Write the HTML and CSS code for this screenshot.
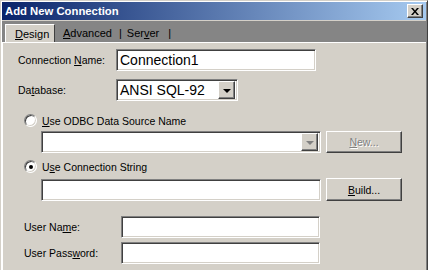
FILE: index.html
```html
<!DOCTYPE html>
<html lang="en">
<head>
    <meta charset="UTF-8">
    <title>Add New Connection</title>
    <link rel="stylesheet" href="styles.css">
</head>
<body>
    <div class="window">
        <div class="titlebar">
            <span class="title">Add New Connection</span>
            <div class="close btn">
                <svg width="8" height="7" viewBox="0 0 8 7">
                    <path d="M0 0h2l2 2.5 2-2.5h2l-3 3.5 3 3.5h-2l-2-2.5-2 2.5h-2l3-3.5z" fill="#000"/>
                </svg>
            </div>
        </div>

        <div class="tabs">
            <div class="tab active"><u>D</u>esign</div>
            <div class="tab tab-advanced"><u>A</u>dvanced</div>
            <div class="sep">|</div>
            <div class="tab tab-server">Ser<u>v</u>er</div>
            <div class="sep">|</div>
        </div>

        <div class="page">
            <div class="row row-name">
                <label class="label">Connection <u>N</u>ame:</label>
                <div class="field big name-field">Connection1</div>
            </div>
            <div class="row row-db">
                <label class="label">Da<u>t</u>abase:</label>
                <div class="field big db-field">
                    <span>ANSI SQL-92</span>
                    <div class="drop btn"><span class="arrow"></span></div>
                </div>
            </div>

            <div class="radio-row radio-odbc">
                <span class="radio"></span>
                <span><u>U</u>se ODBC Data Source Name</span>
            </div>
            <div class="row row-wide row-combo">
                <div class="field wide">
                    <div class="drop btn disabled"><span class="arrow"></span></div>
                </div>
                <div class="btn push disabled"><span><u>N</u>ew...</span></div>
            </div>

            <div class="radio-row radio-string">
                <span class="radio checked"></span>
                <span>U<u>s</u>e Connection String</span>
            </div>
            <div class="row row-wide row-string">
                <div class="field wide"></div>
                <div class="btn push build"><span><u>B</u>uild...</span></div>
            </div>

            <div class="row row-user">
                <label class="label user-label">User Na<u>m</u>e:</label>
                <div class="field user-field"></div>
            </div>
            <div class="row row-pass">
                <label class="label user-label">User Pass<u>w</u>ord:</label>
                <div class="field user-field"></div>
            </div>
        </div>
    </div>
</body>
</html>
```

FILE: styles.css
```css
body {
    margin: 0;
    background: #d4d0c8;
    font-family: 'Liberation Sans', Arial, sans-serif;
    font-size: 10.5px;
    color: #000;
}
u {
    text-decoration-thickness: 1px;
    text-underline-offset: 1px;
}
.window {
    width: 428px;
    height: 270px;
    box-sizing: border-box;
    overflow: hidden;
    border-top: 1px solid #d4d0c8;
    border-left: 1px solid #d4d0c8;
    border-right: 1px solid #404040;
    padding: 1px 1px 0 1px;
    box-shadow: inset 1px 1px #fff, inset -1px 0 #808080;
}
.titlebar {
    height: 18px;
    display: flex;
    align-items: center;
    justify-content: space-between;
    background: linear-gradient(to right, #0a246a, #a6caf0);
    padding: 0 3px 0 3px;
}
.title {
    color: #fff;
    font-weight: bold;
    font-size: 11.3px;
}

/* bevels */
.btn {
    box-sizing: border-box;
    background: #d4d0c8;
    border: 1px solid;
    border-color: #fff #404040 #404040 #fff;
    box-shadow: inset -1px -1px #808080;
}
.field {
    box-sizing: border-box;
    background: #fff;
    border: 1px solid;
    border-color: #808080 #fff #fff #808080;
    box-shadow: inset 1px 1px #404040, inset -1px -1px #d4d0c8;
    height: 22px;
}
.close {
    width: 16px;
    height: 14px;
    display: flex;
    align-items: center;
    justify-content: center;
}

/* tabs */
.tabs {
    margin-top: 1px;
    height: 21px;
    background: #858585;
    display: flex;
    align-items: flex-end;
    padding-left: 3px;
    font-size: 11px;
}
.tab, .sep {
    height: 18px;
    line-height: 18px;
}
.tab.active {
    width: 50px;
    box-sizing: border-box;
    padding-left: 9px;
    background: #d4d0c8;
    border-top: 1px solid #fff;
    border-left: 1px solid #fff;
    border-right: 1px solid #404040;
}
.tab-advanced {
    margin-left: 8px;
    margin-right: 7px;
}
.tab-server {
    margin-left: 5px;
    margin-right: 9px;
}

/* page */
.page {
    border-top: 1px solid #fff;
    border-left: 1px solid #fff;
    height: 230px;
}
.row {
    display: flex;
    align-items: center;
    height: 22px;
}
.label {
    width: 98px;
    flex: none;
}
.row-name {
    margin-top: 6px;
    padding-left: 15px;
}
.row-db {
    margin-top: 8px;
    padding-left: 15px;
}
.big {
    font-size: 14px;
    line-height: 20px;
    padding-left: 3px;
}
.name-field {
    width: 200px;
}
.db-field {
    width: 122px;
    display: flex;
    justify-content: space-between;
    align-items: center;
    padding-right: 2px;
}
.drop {
    width: 17px;
    height: 18px;
    display: flex;
    align-items: center;
    justify-content: center;
}
.arrow {
    width: 0;
    height: 0;
    border-left: 4px solid transparent;
    border-right: 4px solid transparent;
    border-top: 4px solid #000;
    margin-top: 1px;
}
.drop.disabled .arrow {
    border-top-color: #808080;
}

.radio-row {
    display: flex;
    align-items: center;
    height: 13px;
    padding-left: 21px;
    gap: 5px;
}
.radio-odbc {
    margin-top: 13px;
}
.radio-string {
    margin-top: 7px;
}
.radio {
    width: 13px;
    height: 13px;
    box-sizing: border-box;
    border-radius: 50%;
    background: #fff;
    border: 1px solid;
    border-color: #808080 #fff #fff #808080;
    box-shadow: inset 1px 1px #404040, inset -1px -1px #d4d0c8;
    display: flex;
    align-items: center;
    justify-content: center;
}
.radio.checked::after {
    content: "";
    width: 4px;
    height: 4px;
    border-radius: 50%;
    background: #000;
}

.row-wide {
    padding-left: 38px;
    gap: 5px;
}
.row-combo {
    margin-top: 4px;
}
.row-string {
    margin-top: 5px;
    height: 23px;
    align-items: flex-end;
}
.wide {
    width: 280px;
    display: flex;
    justify-content: flex-end;
    align-items: center;
    padding-right: 2px;
}
.push {
    width: 76px;
    height: 22px;
    display: flex;
    align-items: center;
    justify-content: center;
}
.build {
    height: 23px;
    align-self: flex-start;
}
.push.disabled {
    color: #808080;
    text-shadow: 1px 1px #fff;
}

.row-user {
    margin-top: 15px;
    padding-left: 21px;
}
.row-pass {
    margin-top: 4px;
    padding-left: 21px;
}
.user-label {
    width: 97px;
}
.user-field {
    width: 199px;
}
```
